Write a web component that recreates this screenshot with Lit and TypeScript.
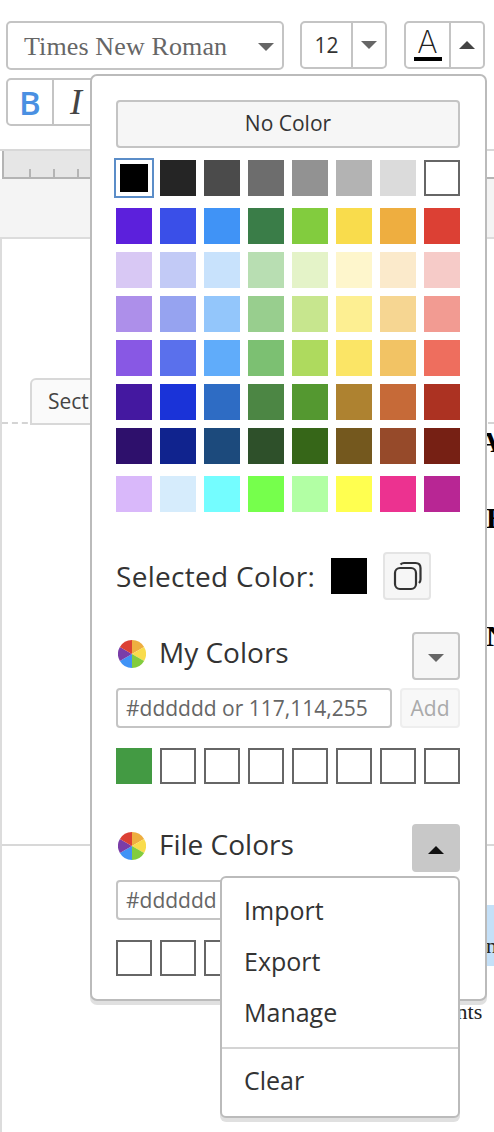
import { LitElement, html, css, svg } from "lit";
import { customElement } from "lit/decorators.js";

const rows: string[][] = [
  ["#000000", "#252525", "#4b4b4b", "#6d6d6d", "#929292", "#b3b3b3", "#dbdbdb", "#ffffff"],
  ["#5c20dc", "#3a4fe8", "#4093f6", "#3a7d48", "#82cc3e", "#f9dc4c", "#eeae40", "#dc4034"],
  ["#d8c8f4", "#c2caf6", "#c8e2fc", "#b8deb2", "#e4f3c8", "#fef6cc", "#fbeacb", "#f6cbc8"],
  ["#ad8fea", "#96a3f0", "#93c6fb", "#98ce8e", "#c7e68e", "#fdef92", "#f6d692", "#f29b92"],
  ["#8858e4", "#5a70ec", "#60acfa", "#7cc072", "#aeda5e", "#fbe566", "#f2c364", "#ee6e5e"],
  ["#4418a0", "#1a33d8", "#2e6cc4", "#4c8644", "#549830", "#ae8230", "#c66a38", "#ac3222"],
  ["#2e106c", "#10238e", "#1c4a7c", "#2e502a", "#366618", "#74581e", "#964a2a", "#762014"],
  ["#d9b8fa", "#d6ecfc", "#74fdff", "#76ff4c", "#b2ffa4", "#ffff50", "#ec3290", "#b82694"],
];

const wedge = (from: number, color: string) => {
  const p = (a: number) => {
    const r = (a * Math.PI) / 180;
    return `${(14 + 14 * Math.sin(r)).toFixed(2)} ${(14 - 14 * Math.cos(r)).toFixed(2)}`;
  };
  return svg`<path d="M14 14L${p(from)}A14 14 0 0 1 ${p(from + 60)}Z" fill=${color}></path>`;
};

const wheel = () => html`<svg class="wheel" viewBox="0 0 28 28" width="28" height="28">
  ${wedge(0, "#eeae40")}${wedge(60, "#f9dc4c")}${wedge(120, "#82cc3e")}${wedge(180, "#4093f6")}${wedge(240, "#7a3da8")}${wedge(300, "#dc4034")}
</svg>`;

const caret = (up = false) => html`<span class=${up ? "caret up" : "caret"}></span>`;

@customElement("app-root")
export class AppRoot extends LitElement {
  static styles = css`
    :host { display: block; width: 494px; height: 1132px; position: relative; overflow: hidden; background: #fff;
      font-family: "Open Sans", "Liberation Sans", sans-serif; color: #333; }
    * { box-sizing: border-box; }

    .toolbar { padding: 21px 9px 0 6px; height: 149px; }
    .row1 { display: flex; align-items: flex-start; }
    .seg { display: flex; border: 2px solid #c4c4c4; border-radius: 5px; height: 48px; background: #fff; }
    .font { width: 278px; height: 49px; margin-right: 16px; align-items: center; justify-content: space-between; padding: 2px 8px 0 16px;
      font-family: "Liberation Serif", serif; font-size: 26px; letter-spacing: 0.13px; color: #666; }
    .size { width: 87px; margin-right: 17px; }
    .size .val { width: 51px; display: flex; align-items: center; justify-content: center; font-size: 21px; border-right: 2px solid #c4c4c4; }
    .size .arr { flex: 1; display: flex; align-items: center; justify-content: center; }
    .color { width: 81px; }
    .color .val { width: 45px; display: flex; flex-direction: column; align-items: center; border-right: 2px solid #c4c4c4; padding-top: 4px; }
    .color .glyph { font-family: Inter, sans-serif; font-weight: 200; font-size: 31px; line-height: 30px; color: #222; height: 30px; }
    .color .bar { width: 28px; height: 4px; background: #000; margin-top: 0; }
    .color .arr { flex: 1; display: flex; align-items: center; justify-content: center; }
    .row2 { display: flex; margin-top: 8px; }
    .style { width: 100px; }
    .style .b { width: 46px; display: flex; align-items: center; justify-content: center; border-right: 2px solid #c4c4c4;
      font-size: 33px; color: #4a90e2; font-weight: 600; }
    .style .i { width: 44px; display: flex; align-items: center; justify-content: center; font-family: "Liberation Serif", serif;
      font-style: italic; font-size: 36px; color: #444; }

    .caret { display: block; width: 0; height: 0; border-left: 8px solid transparent; border-right: 8px solid transparent; border-top: 8px solid #666; }
    .caret.up { border-top: 0; border-bottom: 8px solid #444; }

    .ruler { height: 30px; border-top: 2px solid #d8d8d8; padding-left: 2px; }
    .rulerin { height: 28px; border-bottom: 2px solid #b4b4b4; }
    .rulerfill { height: 26px; width: 400px; background: #e6e6e6; border-left: 2px solid #b4b4b4; display: flex; align-items: flex-end; padding-left: 25px; gap: 22px; }
    .tick { width: 2px; height: 8px; background: #b4b4b4; }
    .band { height: 60px; background: #f4f4f4; border-bottom: 2px solid #dcdcdc; }
    .page { height: 893px; border-left: 2px solid #dcdcdc; display: flex; flex-direction: column; }
    .sec1 { height: 185px; flex: none; border-bottom: 2px dashed #d4d4d4; }
    .doc { font-family: "Liberation Serif", serif; font-weight: 700; font-size: 30px; color: #000; white-space: nowrap; line-height: 34px; }
    .sec2 { height: 422px; flex: none; display: flex; flex-direction: column; border-bottom: 2px solid #d8d8d8; overflow: hidden; }
    .l1 { margin: 1px 0 0 476px; }
    .l2 { margin: 42px 0 0 484px; }
    .l3 { margin: 84px 0 0 484px; }
    .sec3 { flex: 1; }
    .hl { margin: 59px 0 0 484px; height: 61px; background: #c4e0f8; font-family: "Liberation Serif", serif; font-size: 22px; color: #222; padding-top: 29px; line-height: 24px; overflow: hidden; }
    .nts { margin: 34px 0 0 402px; font-family: "Liberation Serif", serif; font-size: 22px; color: #222; line-height: 24px; }

    .tab { position: absolute; left: 30px; top: 378px; width: 70px; height: 47px; border: 2px solid #d8d8d8; border-radius: 6px 0 0 0;
      background: #fafafa; font-size: 21px; padding: 7px 0 0 16px; color: #444; }

    .pop { position: absolute; left: 90px; top: 74px; width: 397px; height: 927px; background: #fff; border: 2px solid #bbb; border-radius: 7px;
      box-shadow: 0 4px 0 rgba(0,0,0,.12); padding: 24px 25px 0 24px; }
    .none { height: 48px; width: 344px; border: 2px solid #c4c4c4; border-radius: 4px; background: #f6f6f6; font-size: 21px; color: #333; display: flex; align-items: center; justify-content: center; padding-bottom: 3px; }
    .grid { margin-top: 12px; display: flex; flex-direction: column; gap: 8px; }
    .gridrow { display: flex; gap: 8px; }
    .gridrow.gapped { margin-top: 4px; }
    .gridrow.gapbelow { margin-bottom: 4px; }
    .sw { width: 36px; height: 36px; flex: none; position: relative; }
    .sw.empty { background: #fff; border: 2px solid #666; }
    .selring { position: absolute; left: -2px; top: -2px; width: 40px; height: 40px; border: 2px solid #5b8dc8; }
    .selin { position: absolute; left: 4px; top: 4px; width: 28px; height: 28px; background: #000; }
    .selected { margin-top: 40px; display: flex; align-items: center; height: 48px; }
    .selected .lbl { font-size: 28px; letter-spacing: 0.3px; width: 215px; color: #333; white-space: nowrap; }
    .selected .box { width: 36px; height: 36px; background: #000; margin-right: 16px; }
    .copy { width: 48px; height: 48px; background: #f6f6f6; border: 2px solid #e4e4e4; border-radius: 4px; display: flex; align-items: center; justify-content: center; }
    .head { display: flex; align-items: flex-start; height: 48px; }
    .head .wheel { margin: 8px 13px 0 2px; flex: none; }
    .head .t { font-size: 28px; line-height: 40px; flex: 1; color: #333; }
    .tog { width: 48px; height: 48px; border: 2px solid #c4c4c4; border-radius: 4px; background: #f6f6f6; display: flex; align-items: center; justify-content: center; padding-top: 4px; }
    .tog.on { background: #c8c8c8; border-color: #c8c8c8; }
    .tog.on .caret.up { border-bottom-color: #111; }
    .my { margin-top: 32px; }
    .file { margin-top: 40px; }
    .add { display: flex; gap: 8px; margin-top: 8px; }
    .inp { width: 276px; height: 40px; border: 2px solid #c4c4c4; border-radius: 4px; font-size: 21px; color: #666; display: flex; align-items: center; padding-left: 8px; white-space: nowrap; overflow: hidden; }
    .addb { width: 60px; height: 40px; border: 2px solid #eee; border-radius: 4px; background: #f8f8f8; color: #aaa; font-size: 21px; display: flex; align-items: center; justify-content: center; }
    .slots { display: flex; gap: 8px; margin-top: 20px; }

    .menu { position: absolute; left: 128px; top: 800px; width: 240px; height: 242px; background: #fff; border: 2px solid #bbb; border-radius: 6px;
      box-shadow: 0 4px 0 rgba(0,0,0,.12); padding-top: 7px; font-size: 25px; color: #333; }
    .mi { height: 51px; padding-left: 22px; line-height: 51px; }
    .sep { height: 2px; background: #d4d4d4; margin-top: 9px; margin-bottom: 6px; }
  `;

  render() {
    const ticks = [0, 1, 2].map(() => html`<span class="tick"></span>`);
    const slots = (n: number, first = "") => html`<div class="slots">
      ${first ? html`<span class="sw" style="background:${first}"></span>` : ""}
      ${Array.from({ length: n }, () => html`<span class="sw empty"></span>`)}
    </div>`;
    return html`
      <div class="toolbar">
        <div class="row1">
          <div class="seg font"><span>Times New Roman</span>${caret()}</div>
          <div class="seg size"><span class="val">12</span><span class="arr">${caret()}</span></div>
          <div class="seg color">
            <span class="val"><span class="glyph">A</span><span class="bar"></span></span>
            <span class="arr">${caret(true)}</span>
          </div>
        </div>
        <div class="row2">
          <div class="seg style"><span class="b">B</span><span class="i">I</span></div>
        </div>
      </div>
      <div class="ruler"><div class="rulerin"><div class="rulerfill">${ticks}</div></div></div>
      <div class="band"></div>
      <div class="page">
        <div class="sec1"></div>
        <div class="sec2">
          <div class="doc l1">A</div>
          <div class="doc l2">E</div>
          <div class="doc l3">N</div>
        </div>
        <div class="sec3">
          <div class="hl">n</div>
          <div class="nts">Contents</div>
        </div>
      </div>
      <div class="tab">Section</div>

      <div class="pop">
        <div class="none">No Color</div>
        <div class="grid">
          ${rows.map(
            (r, i) => html`<div class="gridrow ${i === 7 ? "gapped" : ""} ${i === 0 ? "gapbelow" : ""}">
              ${r.map((c, j) =>
                i === 0 && j === 0
                  ? html`<span class="sw"><span class="selring"></span><span class="selin"></span></span>`
                  : i === 0 && j === 7
                  ? html`<span class="sw empty"></span>`
                  : html`<span class="sw" style="background:${c}"></span>`
              )}
            </div>`
          )}
        </div>
        <div class="selected">
          <span class="lbl">Selected Color:</span>
          <span class="box"></span>
          <span class="copy">
            <svg width="30" height="30" viewBox="0 0 30 30" fill="none" stroke="#333" stroke-width="2.2">
              <rect x="3" y="7" width="21" height="21" rx="5"></rect>
              <path d="M8.5 3.5C9.5 2.5 10.5 2 12 2H23.5C26.5 2 28.5 4 28.5 7V18.5C28.5 20 28 21 27 22"></path>
            </svg>
          </span>
        </div>
        <div class="my">
          <div class="head">${wheel()}<span class="t">My Colors</span><span class="tog">${caret()}</span></div>
          <div class="add"><span class="inp">#dddddd or 117,114,255</span><span class="addb">Add</span></div>
          ${slots(7, "#439a43")}
        </div>
        <div class="file">
          <div class="head">${wheel()}<span class="t">File Colors</span><span class="tog on">${caret(true)}</span></div>
          <div class="add"><span class="inp">#dddddd or 117,114,255</span><span class="addb">Add</span></div>
          ${slots(8)}
        </div>
        <div class="menu">
          <div class="mi">Import</div>
          <div class="mi">Export</div>
          <div class="mi">Manage</div>
          <div class="sep"></div>
          <div class="mi">Clear</div>
        </div>
      </div>
    `;
  }
}
